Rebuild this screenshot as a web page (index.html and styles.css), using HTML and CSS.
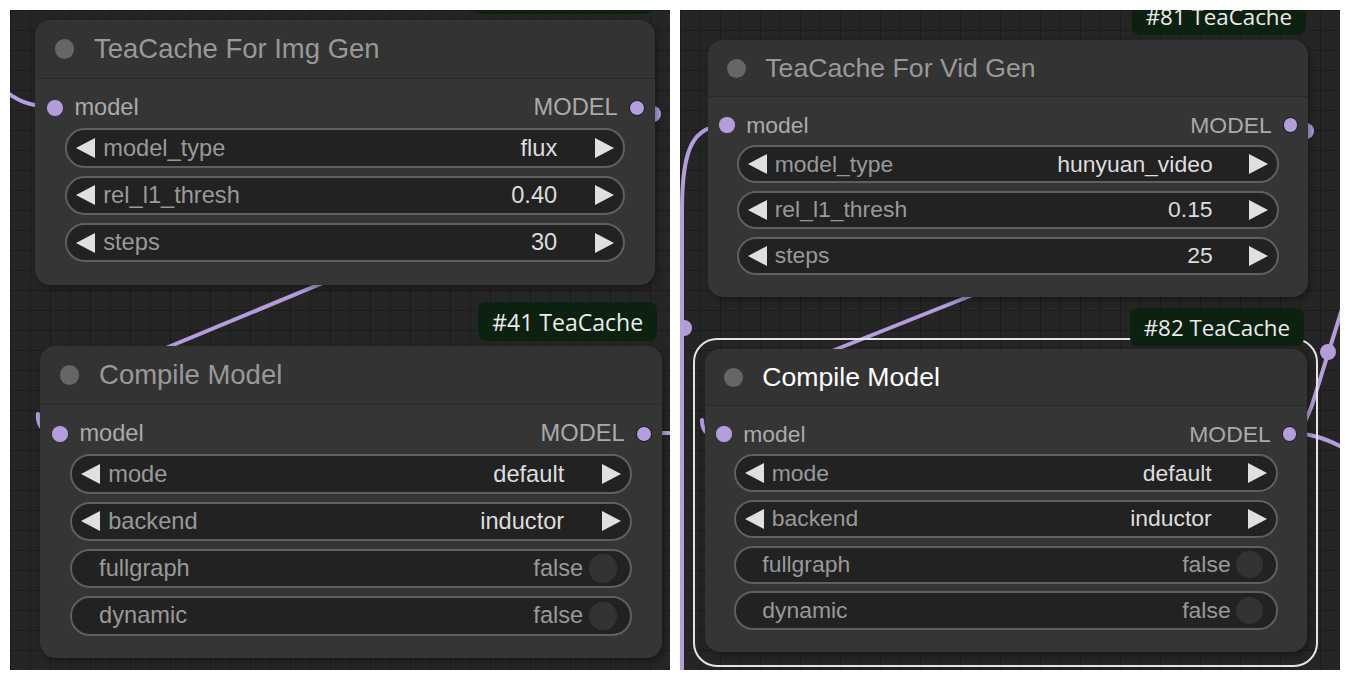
FILE: index.html
```html
<!DOCTYPE html>
<html>
<head>
<meta charset="utf-8">
<title>TeaCache nodes</title>
<link rel="stylesheet" href="styles.css">
</head>
<body>
<div class="page">
  <div class="panel panel-a">
    <svg class="links" width="660" height="660" viewBox="0 0 660 660">
      <path d="M -10 78 C 5 88, 15 97, 45 97" />
      <circle cx="643" cy="104" r="8" />
      <path d="M 344 260 L 127 350" />
      <path d="M 28 404 Q 27 419 40 423 L 50 423" />
      <path d="M 633 423 L 665 423" />
    </svg>
    <div class="badge b-top"></div>
    <div class="node n1">
      <div class="title"><span class="tdot"></span><span class="ttext">TeaCache For Img Gen</span></div>
      <div class="nbody">
        <div class="slots">
          <span class="in"><i class="sdot"></i>model</span>
          <span class="out">MODEL<i class="sdot odot"></i></span>
        </div>
        <div class="widgets">
          <div class="w"><i class="arr l"></i><span class="lab">model_type</span><span class="val">flux</span><i class="arr r"></i></div>
          <div class="w"><i class="arr l"></i><span class="lab">rel_l1_thresh</span><span class="val">0.40</span><i class="arr r"></i></div>
          <div class="w"><i class="arr l"></i><span class="lab">steps</span><span class="val">30</span><i class="arr r"></i></div>
        </div>
      </div>
    </div>
    <div class="badge b41">#41 TeaCache</div>
    <div class="node n2">
      <div class="title"><span class="tdot"></span><span class="ttext">Compile Model</span></div>
      <div class="nbody">
        <div class="slots">
          <span class="in"><i class="sdot"></i>model</span>
          <span class="out">MODEL<i class="sdot odot"></i></span>
        </div>
        <div class="widgets">
          <div class="w"><i class="arr l"></i><span class="lab">mode</span><span class="val">default</span><i class="arr r"></i></div>
          <div class="w"><i class="arr l"></i><span class="lab">backend</span><span class="val">inductor</span><i class="arr r"></i></div>
          <div class="w toggle"><span class="lab">fullgraph</span><span class="tval">false</span><i class="knob"></i></div>
          <div class="w toggle"><span class="lab">dynamic</span><span class="tval">false</span><i class="knob"></i></div>
        </div>
      </div>
    </div>
  </div>

  <div class="panel panel-b">
    <svg class="links" width="660" height="660" viewBox="0 0 660 660">
      <path d="M 47 115 C 12 115, 2 140, 2 200 L 2 665" />
      <circle cx="4" cy="318" r="8" />
      <circle cx="626" cy="121" r="8" />
      <path d="M 305 280 L 142 345" />
      <path d="M 22 410 Q 22 425 35 425 L 44 425" />
      <path d="M 609 423 C 622 423, 626 410, 632 395 L 668 280" />
      <circle cx="648" cy="342" r="8" />
      <path d="M 609 423 C 630 423, 645 428, 668 440" />
    </svg>
    <div class="badge b81">#81 TeaCache</div>
    <div class="node n3">
      <div class="title"><span class="tdot"></span><span class="ttext">TeaCache For Vid Gen</span></div>
      <div class="nbody">
        <div class="slots">
          <span class="in"><i class="sdot"></i>model</span>
          <span class="out">MODEL<i class="sdot odot"></i></span>
        </div>
        <div class="widgets">
          <div class="w"><i class="arr l"></i><span class="lab">model_type</span><span class="val">hunyuan_video</span><i class="arr r"></i></div>
          <div class="w"><i class="arr l"></i><span class="lab">rel_l1_thresh</span><span class="val">0.15</span><i class="arr r"></i></div>
          <div class="w"><i class="arr l"></i><span class="lab">steps</span><span class="val">25</span><i class="arr r"></i></div>
        </div>
      </div>
    </div>
    <div class="selring"></div>
    <div class="node n4 sel">
      <div class="title"><span class="tdot"></span><span class="ttext">Compile Model</span></div>
      <div class="nbody">
        <div class="slots">
          <span class="in"><i class="sdot"></i>model</span>
          <span class="out">MODEL<i class="sdot odot"></i></span>
        </div>
        <div class="widgets">
          <div class="w"><i class="arr l"></i><span class="lab">mode</span><span class="val">default</span><i class="arr r"></i></div>
          <div class="w"><i class="arr l"></i><span class="lab">backend</span><span class="val">inductor</span><i class="arr r"></i></div>
          <div class="w toggle"><span class="lab">fullgraph</span><span class="tval">false</span><i class="knob"></i></div>
          <div class="w toggle"><span class="lab">dynamic</span><span class="tval">false</span><i class="knob"></i></div>
        </div>
      </div>
    </div>
    <div class="badge b82">#82 TeaCache</div>
  </div>
</div>
</body>
</html>
```

FILE: styles.css
```css
html, body {
  margin: 0;
  padding: 0;
  background: #ffffff;
}

.page {
  display: flex;
  gap: 10px;
  padding: 10px;
}

.panel {
  --u: 1.97px;
  position: relative;
  width: 660px;
  height: 660px;
  flex: none;
  overflow: hidden;
  background-color: #252525;
  background-image:
    linear-gradient(#1c1c1c 1px, transparent 1px),
    linear-gradient(90deg, #1c1c1c 1px, transparent 1px);
  background-size: 20px 20px;
  font-family: "Liberation Sans", Arial, sans-serif;
}

.panel-b {
  --u: 1.91px;
}

.links {
  position: absolute;
  left: 0;
  top: 0;
}

.links path {
  fill: none;
  stroke: #b49ddd;
  stroke-width: 4;
  stroke-linecap: round;
}

.links circle {
  fill: #b49ddd;
}

/* nodes */
.node {
  position: absolute;
  background: #353535;
  border-radius: calc(var(--u) * 8);
  box-shadow: 2px 3px 6px rgba(0, 0, 0, 0.35);
  overflow: hidden;
}

.n1 { left: 25px; top: 10px; width: 620px; }
.n2 { left: 30px; top: 336px; width: 622px; }
.n3 { left: 28px; top: 30px; width: 600px; }
.n4 { left: 25px; top: 339px; width: 602px; }

.title {
  height: calc(var(--u) * 30);
  box-sizing: border-box;
  background: #333333;
  border-bottom: 1px solid #2a2a2a;
  display: flex;
  align-items: center;
  padding-left: calc(var(--u) * 10);
  gap: calc(var(--u) * 10);
}

.tdot {
  width: calc(var(--u) * 10);
  height: calc(var(--u) * 10);
  border-radius: 50%;
  background: #666666;
  flex: none;
}

.ttext {
  font-size: calc(var(--u) * 13.95);
  color: #999999;
  white-space: nowrap;
}

.sel .ttext {
  color: #ffffff;
}

.nbody {
  padding: calc(var(--u) * 4) 0 calc(var(--u) * 11.5);
}

.slots {
  height: calc(var(--u) * 20);
  display: flex;
  align-items: center;
  justify-content: space-between;
  font-size: calc(var(--u) * 12);
  color: #aaaaaa;
  padding-top: 2px;
  box-sizing: border-box;
}

.in {
  display: flex;
  align-items: center;
  gap: calc(var(--u) * 6);
  padding-left: calc(var(--u) * 6);
}

.out {
  display: flex;
  align-items: center;
  gap: calc(var(--u) * 6);
  padding-right: calc(var(--u) * 5);
}

.sdot {
  display: block;
  width: calc(var(--u) * 8);
  height: calc(var(--u) * 8);
  border-radius: 50%;
  background: #b49ddd;
  box-sizing: border-box;
  flex: none;
}

.odot {
  border: 1.5px solid #141414;
}

/* widgets */
.widgets {
  margin-top: calc(var(--u) * 1);
  padding: 0 calc(var(--u) * 15);
  display: flex;
  flex-direction: column;
  gap: calc(var(--u) * 4);
}

.w {
  height: calc(var(--u) * 20);
  box-sizing: border-box;
  border: 2px solid #5f5f5f;
  border-radius: calc(var(--u) * 10);
  background: #222222;
  display: flex;
  align-items: center;
  font-size: calc(var(--u) * 12);
  padding: 0 calc(var(--u) * 6 - 2px);
  white-space: nowrap;
}

.arr {
  display: block;
  width: 0;
  height: 0;
  flex: none;
  border-top: calc(var(--u) * 5.4) solid transparent;
  border-bottom: calc(var(--u) * 5.4) solid transparent;
}

.arr.l {
  border-right: calc(var(--u) * 10) solid #e0e0e0;
}

.arr.r {
  border-left: calc(var(--u) * 10) solid #e0e0e0;
}

.lab {
  color: #999999;
  margin-left: calc(var(--u) * 4);
}

.val {
  color: #dddddd;
  margin-left: auto;
  margin-right: calc(var(--u) * 19);
}

.toggle {
  padding: 0 calc(var(--u) * 7.8 - 2px) 0 calc(var(--u) * 15 - 2px);
}

.toggle .lab {
  margin-left: 0;
}

.tval {
  color: #999999;
  margin-left: auto;
  margin-right: calc(var(--u) * 2.8);
}

.knob {
  display: block;
  width: calc(var(--u) * 14.4);
  height: calc(var(--u) * 14.4);
  border-radius: 50%;
  background: #333333;
  flex: none;
}

/* badges */
.badge {
  position: absolute;
  height: calc(var(--u) * 20);
  width: calc(var(--u) * 91);
  box-sizing: border-box;
  background: #0c2110;
  color: #ececec;
  border-radius: calc(var(--u) * 4);
  font-family: "Open Sans", "Noto Sans", sans-serif;
  font-size: calc(var(--u) * 11.7);
  display: flex;
  align-items: center;
  justify-content: center;
  white-space: nowrap;
}

.b-top { left: 463px; top: -35px; }
.b41 { left: 468px; top: 292px; }
.b81 { left: 452px; top: -13px; }
.b82 { left: 450px; top: 298px; }

/* selection outline */
.selring {
  position: absolute;
  left: 13px;
  top: 328px;
  width: 625px;
  height: 329px;
  box-sizing: border-box;
  border: 2px solid #e4e4e4;
  border-radius: 24px;
}
```
